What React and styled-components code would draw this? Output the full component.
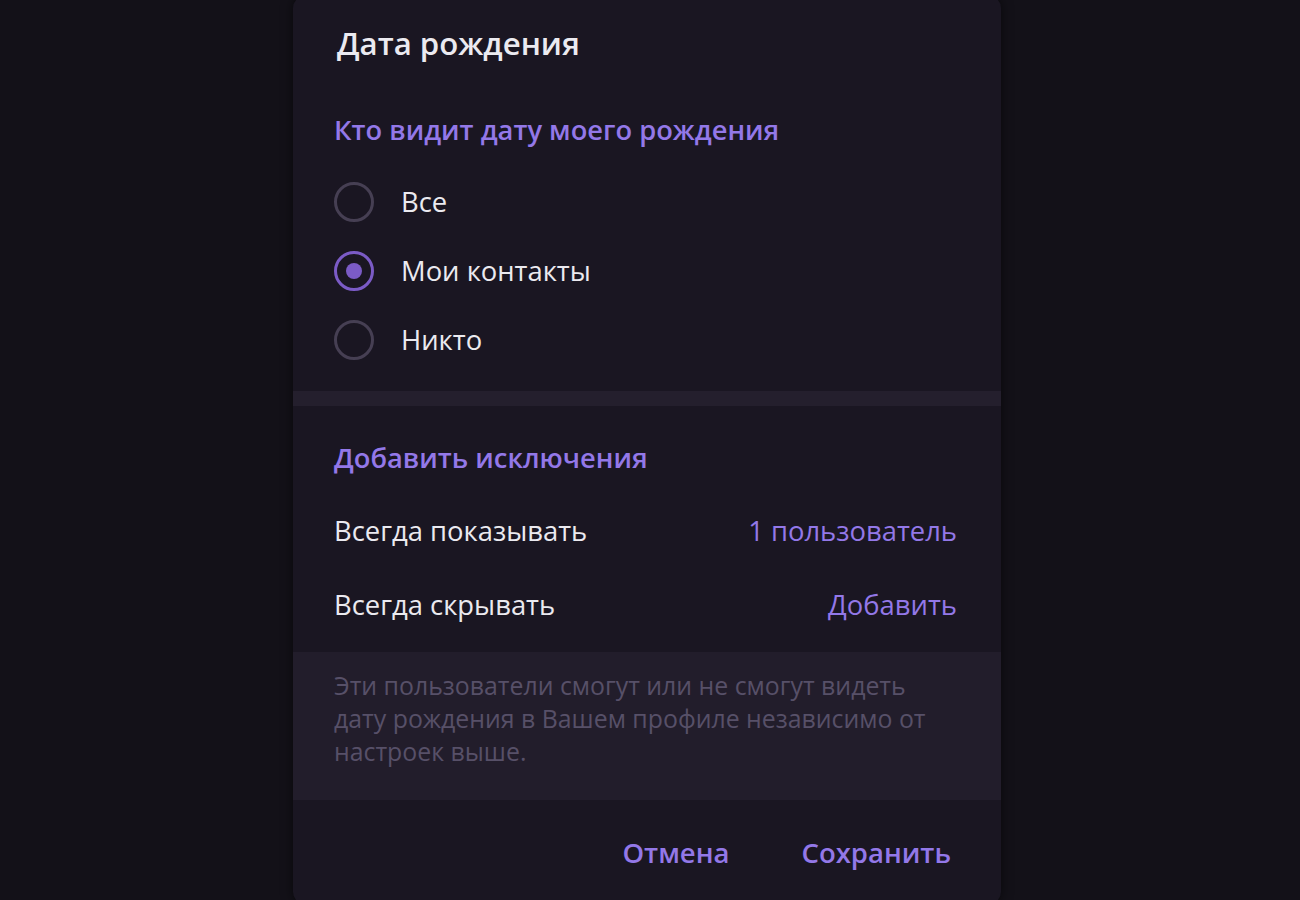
import React from "react";
import styled, { createGlobalStyle } from "styled-components";

const Global = createGlobalStyle`
  html, body { margin: 0; padding: 0; background: #131118; height: 100%; overflow: hidden; }
  body { font-family: "Open Sans", "Noto Sans", sans-serif; -webkit-font-smoothing: antialiased; }
`;

const Page = styled.div`
  display: flex;
  justify-content: flex-start;
  padding-left: 293px;
  height: 900px;
`;

const Dialog = styled.div`
  width: 708px;
  margin-top: -4px;
  height: 908px;
  background: #1a1622;
  border-radius: 12px;
  box-shadow: 0 0 12px rgba(0, 0, 0, 0.55);
  display: flex;
  flex-direction: column;
  overflow: hidden;
`;

const Title = styled.h1`
  margin: 0;
  padding: 29px 44px 0 44px;
  font-size: 31.2px;
  font-weight: 600;
  color: #ebeaf0;
  line-height: 36px;
`;

const Section = styled.section`
  padding: 0 44px 0 41px;
  display: flex;
  flex-direction: column;
`;

const SectionHeader = styled.h2`
  margin: 0;
  font-size: 27.3px;
  font-weight: 600;
  color: #9378e8;
  line-height: 34px;
  padding-top: ${(p) => p.$top}px;
`;

const RadioList = styled.div`
  display: flex;
  flex-direction: column;
  gap: 29px;
  padding-top: 35px;
  padding-bottom: 31px;
`;

const RadioRow = styled.label`
  display: flex;
  align-items: center;
  gap: 27px;
  height: 40px;
  cursor: pointer;
`;

const RadioCircle = styled.span`
  box-sizing: border-box;
  width: 40px;
  height: 40px;
  border-radius: 50%;
  border: 3px solid ${(p) => (p.$on ? "#7b5bc6" : "#463f53")};
  display: flex;
  align-items: center;
  justify-content: center;
  flex-shrink: 0;
  &::after {
    content: "";
    width: 16px;
    height: 16px;
    border-radius: 50%;
    background: #7b5bc6;
    display: ${(p) => (p.$on ? "block" : "none")};
  }
`;

const Label = styled.span`
  font-size: 27.4px;
  color: #ebeaf0;
  line-height: 34px;
`;

const Divider = styled.div`
  height: 15px;
  background: #241f2d;
`;

const Rows = styled.div`
  display: flex;
  flex-direction: column;
  gap: 40px;
  padding-top: 39px;
  padding-bottom: 30px;
`;

const Row = styled.div`
  display: flex;
  justify-content: space-between;
  align-items: center;
  height: 34px;
`;

const Value = styled.span`
  font-size: 27.4px;
  color: #9378e8;
  line-height: 34px;
`;

const Info = styled.div`
  background: #221d2b;
  padding: 17px 44px 30px 41px;
  font-size: 24.85px;
  line-height: 33px;
  color: #575068;
  height: 148px;
  box-sizing: border-box;
`;

const InfoText = styled.p`
  margin: 0;
  max-width: 610px;
`;

const Footer = styled.div`
  display: flex;
  justify-content: flex-end;
  gap: 72px;
  padding: 36px 50px 0 0;
`;

const Button = styled.button`
  background: none;
  border: none;
  padding: 0;
  font-family: inherit;
  font-size: 27.5px;
  font-weight: 600;
  color: #9378e8;
  line-height: 34px;
  cursor: pointer;
`;

const options = ["Все", "Мои контакты", "Никто"];

export default function App() {
  const [sel, setSel] = React.useState(1);
  return (
    <>
      <Global />
      <Page>
        <Dialog>
          <Title>Дата рождения</Title>
          <Section>
            <SectionHeader $top={52}>Кто видит дату моего рождения</SectionHeader>
            <RadioList>
              {options.map((o, i) => (
                <RadioRow key={o} onClick={() => setSel(i)}>
                  <RadioCircle $on={sel === i} />
                  <Label>{o}</Label>
                </RadioRow>
              ))}
            </RadioList>
          </Section>
          <Divider />
          <Section>
            <SectionHeader $top={35}>Добавить исключения</SectionHeader>
            <Rows>
              <Row>
                <Label>Всегда показывать</Label>
                <Value>1 пользователь</Value>
              </Row>
              <Row>
                <Label>Всегда скрывать</Label>
                <Value>Добавить</Value>
              </Row>
            </Rows>
          </Section>
          <Info>
            <InfoText>
              Эти пользователи смогут или не смогут видеть дату рождения в Вашем профиле независимо от настроек выше.
            </InfoText>
          </Info>
          <Footer>
            <Button>Отмена</Button>
            <Button>Сохранить</Button>
          </Footer>
        </Dialog>
      </Page>
    </>
  );
}
